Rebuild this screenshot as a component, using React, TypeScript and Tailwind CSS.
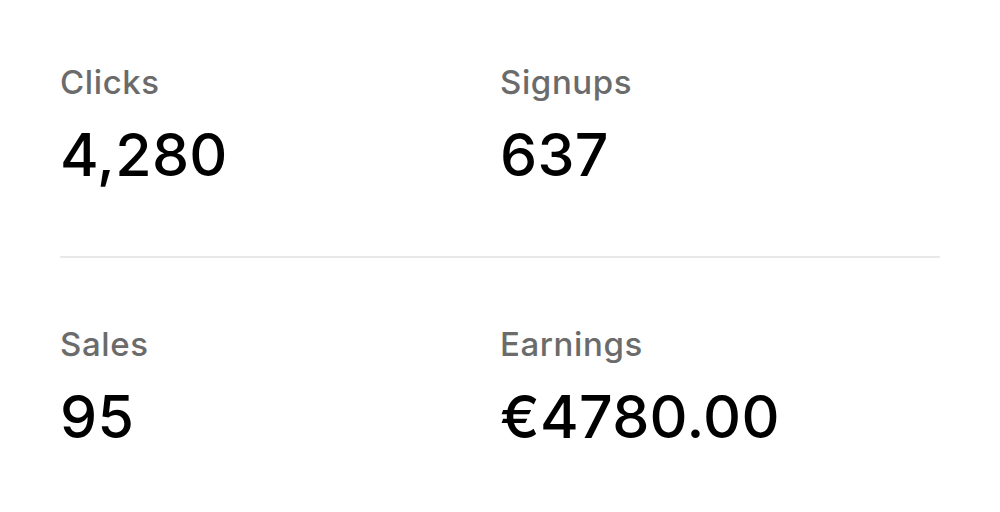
const stats = [
  [
    { label: "Clicks", value: "4,280" },
    { label: "Signups", value: "637" },
  ],
  [
    { label: "Sales", value: "95" },
    { label: "Earnings", value: "€4780.00" },
  ],
];

export default function App() {
  return (
    <div className="w-[1000px] h-[512px] bg-white px-[60px] font-['Inter',sans-serif]">
      {stats.map((row, i) => (
        <div key={i} className={i === 0 ? "grid grid-cols-2 pt-[60px] pb-[61px] border-b-2 border-[#e8e8e8]" : "grid grid-cols-2 pt-[64px]"}>
          {row.map((s) => (
            <div key={s.label}>
              <div className="text-[33px] leading-[44px] font-medium text-[#6b6b6b] tracking-[0.6px]">{s.label}</div>
              <div className="text-[59px] leading-[80px] font-medium text-black mt-[11px] tracking-[0.3px]">{s.value}</div>
            </div>
          ))}
        </div>
      ))}
    </div>
  );
}
